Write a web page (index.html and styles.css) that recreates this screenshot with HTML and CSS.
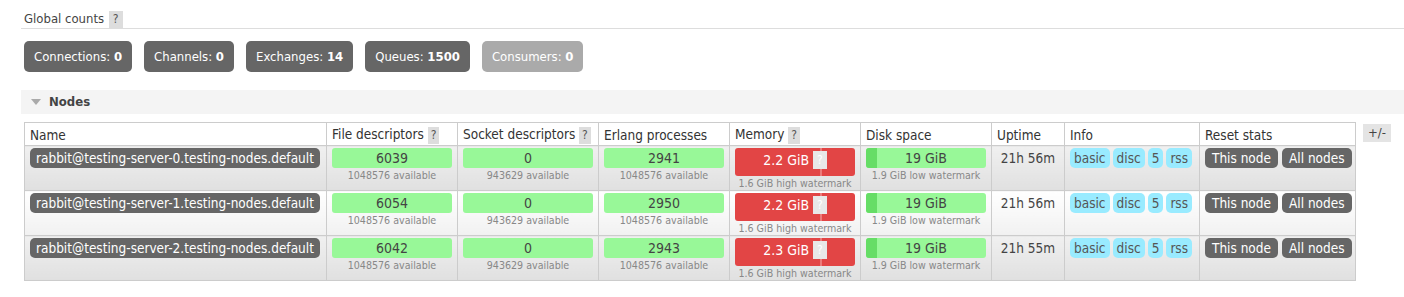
FILE: index.html
```html
<!DOCTYPE html>
<html lang="en">
<head>
    <meta charset="UTF-8">
    <title>Overview</title>
    <link rel="stylesheet" href="styles.css">
</head>
<body>
    <div class="section">
        <h2 class="plain-title">Global counts <span class="help">?</span></h2>
        <div class="counts">
            <span class="count">Connections: <b>0</b></span>
            <span class="count">Channels: <b>0</b></span>
            <span class="count">Exchanges: <b>14</b></span>
            <span class="count">Queues: <b>1500</b></span>
            <span class="count count-empty">Consumers: <b>0</b></span>
        </div>
    </div>

    <div class="section">
        <h2 class="fold-title"><span class="arrow"></span>Nodes</h2>
        <div class="table-wrap">
            <table class="list">
                <colgroup>
                    <col style="width:302px">
                    <col style="width:131px">
                    <col style="width:141px">
                    <col style="width:131px">
                    <col style="width:131px">
                    <col style="width:131px">
                    <col style="width:73px">
                    <col style="width:135px">
                    <col style="width:156px">
                </colgroup>
                <thead>
                    <tr>
                        <th>Name</th>
                        <th>File descriptors <span class="help">?</span></th>
                        <th>Socket descriptors <span class="help">?</span></th>
                        <th>Erlang processes</th>
                        <th>Memory <span class="help">?</span></th>
                        <th>Disk space</th>
                        <th>Uptime</th>
                        <th>Info</th>
                        <th>Reset stats</th>
                    </tr>
                </thead>
                <tbody>
                    <tr class="alt1">
                        <td><span class="node-name">rabbit@testing-server-0.testing-nodes.default</span></td>
                        <td><div class="bar">6039</div><sub>1048576 available</sub></td>
                        <td><div class="bar">0</div><sub>943629 available</sub></td>
                        <td><div class="bar">2941</div><sub>1048576 available</sub></td>
                        <td><div class="bar bar-red">2.2 GiB <span class="help">?</span><i class="mark"></i></div><sub>1.6 GiB high watermark</sub></td>
                        <td><div class="bar bar-disk"><i class="fill"></i>19 GiB</div><sub>1.9 GiB low watermark</sub></td>
                        <td class="uptime">21h 56m</td>
                        <td><span class="tag">basic</span><span class="tag">disc</span><span class="tag">5</span><span class="tag">rss</span></td>
                        <td><span class="btn">This node</span><span class="btn">All nodes</span></td>
                    </tr>
                    <tr class="alt2">
                        <td><span class="node-name">rabbit@testing-server-1.testing-nodes.default</span></td>
                        <td><div class="bar">6054</div><sub>1048576 available</sub></td>
                        <td><div class="bar">0</div><sub>943629 available</sub></td>
                        <td><div class="bar">2950</div><sub>1048576 available</sub></td>
                        <td><div class="bar bar-red">2.2 GiB <span class="help">?</span><i class="mark"></i></div><sub>1.6 GiB high watermark</sub></td>
                        <td><div class="bar bar-disk"><i class="fill"></i>19 GiB</div><sub>1.9 GiB low watermark</sub></td>
                        <td class="uptime">21h 56m</td>
                        <td><span class="tag">basic</span><span class="tag">disc</span><span class="tag">5</span><span class="tag">rss</span></td>
                        <td><span class="btn">This node</span><span class="btn">All nodes</span></td>
                    </tr>
                    <tr class="alt1">
                        <td><span class="node-name">rabbit@testing-server-2.testing-nodes.default</span></td>
                        <td><div class="bar">6042</div><sub>1048576 available</sub></td>
                        <td><div class="bar">0</div><sub>943629 available</sub></td>
                        <td><div class="bar">2943</div><sub>1048576 available</sub></td>
                        <td><div class="bar bar-red">2.3 GiB <span class="help">?</span><i class="mark"></i></div><sub>1.6 GiB high watermark</sub></td>
                        <td><div class="bar bar-disk"><i class="fill"></i>19 GiB</div><sub>1.9 GiB low watermark</sub></td>
                        <td class="uptime">21h 55m</td>
                        <td><span class="tag">basic</span><span class="tag">disc</span><span class="tag">5</span><span class="tag">rss</span></td>
                        <td><span class="btn">This node</span><span class="btn">All nodes</span></td>
                    </tr>
                </tbody>
            </table>
            <span class="toggle">+/-</span>
        </div>
    </div>
</body>
</html>
```

FILE: styles.css
```css
* {
    margin: 0;
    padding: 0;
    box-sizing: border-box;
}

body {
    font: 13.5px "DejaVu Sans Condensed", "DejaVu Sans", sans-serif;
    color: #444;
    background: #fff;
    padding: 9px 0 0 21px;
}

.help {
    display: inline-block;
    background: #ddd;
    color: #555;
    font-weight: normal;
    font-size: 12px;
    padding: 0 3px;
    line-height: 17px;
}

/* Global counts */
.plain-title {
    font-size: 13px;
    font-weight: normal;
    color: #444;
    padding-left: 3px;
    border-bottom: 1px solid #ddd;
    line-height: 19px;
}

.plain-title .help {
    margin-left: 1px;
    padding: 0 4px;
}

.counts {
    display: flex;
    gap: 12px;
    padding: 12px 0 0 3px;
}

.count {
    background: #666;
    color: #fff;
    border-radius: 5px;
    padding: 0 10px;
    line-height: 31px;
    font-size: 13px;
}

.count-empty {
    background: #aaa;
}

/* Nodes */
.section + .section {
    margin-top: 18px;
}

.fold-title {
    background: #f4f4f4;
    font-size: 13px;
    font-weight: bold;
    color: #444;
    line-height: 24px;
    padding-left: 10px;
    display: flex;
    align-items: center;
}

.arrow {
    width: 0;
    height: 0;
    border-left: 5px solid transparent;
    border-right: 5px solid transparent;
    border-top: 6px solid #aaa;
    margin-right: 8px;
}

.table-wrap {
    display: flex;
    align-items: flex-start;
    gap: 7px;
    padding: 8px 0 0 3px;
}

.toggle {
    margin-top: 2px;
    background: #e4e4e4;
    padding: 0 5px;
    line-height: 18px;
    font-size: 13px;
}

table.list {
    border-collapse: collapse;
    table-layout: fixed;
    width: 1331px;
    border: 1px solid #ccc;
}

table.list th {
    text-align: left;
    font-weight: normal;
    font-size: 13.5px;
    color: #333;
    background: #fff;
    padding: 1px 5px 0 5px;
    height: 23px;
    border: 1px solid #ccc;
    white-space: nowrap;
}

table.list td {
    vertical-align: top;
    padding: 2px 5px 0 5px;
    height: 45px;
    border: 1px solid #ccc;
    text-align: center;
}

tr.alt1 td {
    background: linear-gradient(#f0f0f0, #e0e0e0);
}

tr.alt2 td {
    background: linear-gradient(#fff, #f1f1f1);
}

.node-name {
    display: inline-block;
    background: #666;
    color: #fff;
    border-radius: 5px;
    padding: 0 6px;
    line-height: 20px;
    font-size: 13.5px;
    white-space: nowrap;
}

table.list td:first-child {
    text-align: left;
}

.bar {
    position: relative;
    background: #98f898;
    border-radius: 3px;
    line-height: 20px;
    font-size: 14px;
    color: #444;
    overflow: hidden;
}

.bar-red {
    background: #e24545;
    color: #fff;
    height: 28px;
    line-height: 24px;
}

.bar-red .help {
    position: relative;
    z-index: 1;
    background: #e8e8e8;
    color: #fff;
    line-height: 18px;
    vertical-align: 1px;
    padding: 0 4px;
}

.mark {
    position: absolute;
    top: 0;
    bottom: 0;
    left: 85px;
    width: 2px;
    background: #ec7b7b;
}

.fill {
    position: absolute;
    left: 0;
    top: 0;
    bottom: 0;
    width: 11px;
    background: #66dd66;
}

sub {
    display: block;
    font-size: 10.6px;
    color: #888;
    line-height: 14px;
    vertical-align: baseline;
    white-space: nowrap;
}

.uptime {
    font-size: 13.5px;
}

table.list td.uptime {
    padding-top: 4px;
}

.tag {
    display: inline-block;
    background: #99ebff;
    color: #555;
    border-radius: 5px;
    padding: 0 4px;
    line-height: 20px;
    font-size: 13.5px;
    margin-right: 3px;
}

table.list td:nth-child(8),
table.list td:nth-child(9) {
    text-align: left;
    white-space: nowrap;
}

.btn {
    display: inline-block;
    background: #666;
    color: #fff;
    border-radius: 5px;
    padding: 0 7px;
    line-height: 20px;
    font-size: 13.5px;
    margin-right: 4px;
}
```
